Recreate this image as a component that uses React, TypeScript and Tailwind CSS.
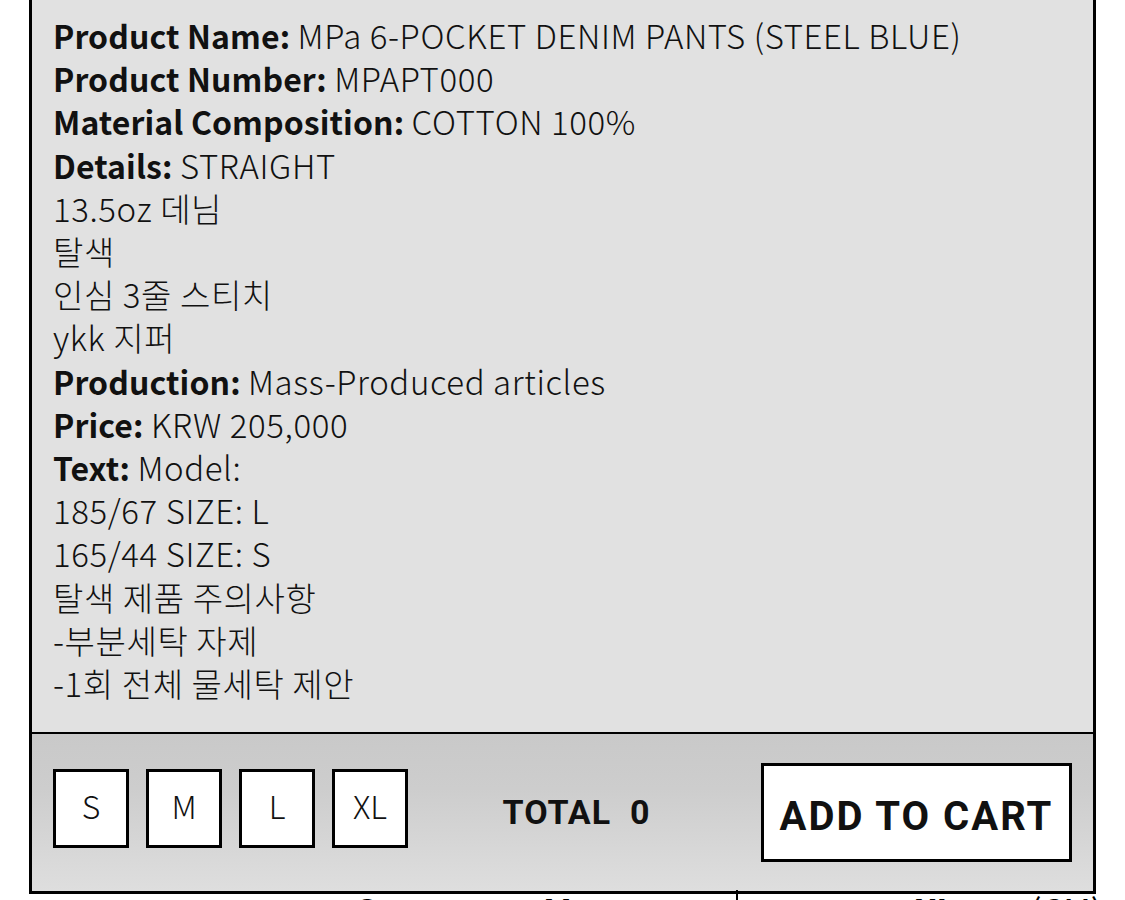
import React from "react";

const lines: { label?: string; text: string }[] = [
  { label: "Product Name:", text: "MPa 6-POCKET DENIM PANTS (STEEL BLUE)" },
  { label: "Product Number:", text: "MPAPT000" },
  { label: "Material Composition:", text: "COTTON 100%" },
  { label: "Details:", text: "STRAIGHT" },
  { text: "13.5oz 데님" },
  { text: "탈색" },
  { text: "인심 3줄 스티치" },
  { text: "ykk 지퍼" },
  { label: "Production:", text: "Mass-Produced articles" },
  { label: "Price:", text: "KRW 205,000" },
  { label: "Text:", text: "Model:" },
  { text: "185/67 SIZE: L" },
  { text: "165/44 SIZE: S" },
  { text: "탈색 제품 주의사항" },
  { text: "-부분세탁 자제" },
  { text: "-1회 전체 물세탁 제안" },
];

const kr = { fontFamily: '"Noto Sans CJK KR", "Noto Sans", sans-serif' };
const rb = { fontFamily: "Roboto, sans-serif" };

export default function App() {
  return (
    <div className="w-[1125px] h-[900px] overflow-hidden bg-white">
      <div className="ml-[29px] w-[1067px] border-x-[3px] border-b-[3px] border-black bg-[#e1e1e1]">
        <div
          className="pl-[21px] pt-[14px] pb-[27px] text-[33px] leading-[43.2px] text-[#111]"
          style={kr}
        >
          {lines.map((l, i) => (
            <div key={i} className="whitespace-nowrap">
              {l.label && <span className="font-bold text-[32px] tracking-[0.1px]">{l.label} </span>}
              <span className="font-light tracking-[0.6px]">{l.text}</span>
            </div>
          ))}
        </div>
        <div className="h-[159px] border-t-[2px] border-black bg-[linear-gradient(180deg,#c9c9c9_0%,#cdcdcd_35%,#dedede_100%)] flex items-center pl-[21px] pr-[21px]">
          <div className="flex gap-[17px] items-center pb-[8px]">
            {["S", "M", "L", "XL"].map((s) => (
              <div
                key={s}
                className="w-[76px] h-[79px] bg-white border-[3px] border-black flex items-center justify-center pb-[8px] text-[32px] font-light text-[#111]"
                style={kr}
              >
                {s}
              </div>
            ))}
          </div>
          <div
            className="flex-1 text-center text-[34px] font-bold text-[#111] tracking-[1px] pr-[16px]"
            style={rb}
          >
            TOTAL&nbsp;&nbsp;0
          </div>
          <div
            className="w-[311px] h-[99px] bg-white border-[3px] border-black flex items-center justify-center pt-[8px] text-[40px] font-bold text-[#111] tracking-[2px]"
            style={rb}
          >
            ADD TO CART
          </div>
        </div>
      </div>
      <div
        className="flex h-[60px] -mt-[4px] text-[34px] font-bold text-black leading-[40px] whitespace-nowrap"
        style={kr}
      >
        <span className="w-[356px]"></span>
        <span className="w-[187px]">S</span>
        <span className="w-[193px]">M</span>
        <span className="w-[179px] border-l-[2px] border-black"></span>
        <span className="w-[115px]">XL</span>
        <span className="font-normal">(CM)</span>
      </div>
    </div>
  );
}
